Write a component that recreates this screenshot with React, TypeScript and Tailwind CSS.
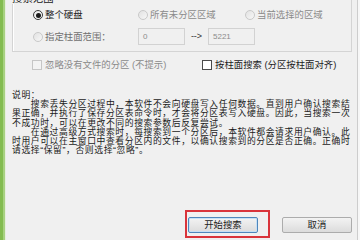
import React from 'react'

function Radio({ checked = false, disabled = false }: { checked?: boolean; disabled?: boolean }) {
  return (
    <span
      className={`w-[10px] h-[10px] rounded-full border flex items-center justify-center shrink-0 ${
        disabled
          ? 'border-[#c9c9c9] bg-linear-to-br from-[#e2e2e2] to-[#f7f7f7]'
          : 'border-[#3a3a3a] bg-linear-to-br from-[#e9e9e9] to-[#ffffff]'
      }`}
    >
      {checked && <span className="w-[5px] h-[5px] rounded-full bg-[#1c1c1c]" />}
    </span>
  )
}

function Checkbox({ disabled = false }: { disabled?: boolean }) {
  return (
    <span
      className={`w-[10px] h-[10px] border shrink-0 ${
        disabled ? 'border-[#c6c6c6] bg-[#f3f3f3]' : 'border-[#4a4a4a] bg-white'
      }`}
    />
  )
}

const lines = [
  '　　搜索丢失分区过程中，本软件不会向硬盘写入任何数据。直到用户确认搜索结',
  '果正确，并执行了保存分区表命令时，才会将分区表写入硬盘。因此，当搜索一次',
  '不成功时，可以在更改不同的搜索参数后反复尝试。',
  '　　在通过高级方式搜索时，每搜索到一个分区后，本软件都会请求用户确认。此',
  '时用户可以在主窗口中查看分区内的文件，以确认搜索到的分区是否正确。正确时',
  '请选择“保留”，否则选择“忽略”。',
]

export default function App() {
  return (
    <div className="w-[360px] h-[240px] overflow-hidden flex bg-[#f0f0f0] text-[#1b1b1b] text-[9.4px] font-['Liberation_Sans','Noto_Sans_CJK_SC',sans-serif]">
      {/* left green frame */}
      <div className="w-[3px] bg-[#83bc50]" />
      <div className="w-[2px] bg-[#a7d180]" />
      <div className="w-[1px] bg-[#e6efdd]" />

      <div className="flex-1 flex flex-col pl-[6px] pr-[5px] relative">
        {/* group box */}
        <div className="relative mt-[-2px] h-[54px] border border-[#d4d4d4] shadow-[inset_1px_1px_0_#ffffff] flex flex-col pt-[10px] pl-[20px]">
          <span className="absolute left-[-2px] top-[-5px] leading-[10px] text-[10.4px] px-[1px] bg-[#f0f0f0] text-[#222]">
            搜索范围
          </span>

          <div className="h-[12px] flex items-center">
            <div className="w-[105px] flex items-center gap-[2px]">
              <Radio checked />
              <span className="leading-[12px]">整个硬盘</span>
            </div>
            <div className="w-[107px] flex items-center gap-[2px] text-[#8a8a8a]">
              <Radio disabled />
              <span className="leading-[12px]">所有未分区区域</span>
            </div>
            <div className="flex items-center gap-[2px] text-[#8a8a8a]">
              <Radio disabled />
              <span className="leading-[12px]">当前选择的区域</span>
            </div>
          </div>

          <div className="h-[17px] mt-[7px] flex items-center">
            <div className="w-[105px] flex items-center gap-[2px] text-[#6f6f6f]">
              <Radio disabled />
              <span className="leading-[12px]">指定柱面范围：</span>
            </div>
            <div className="w-[47px] h-[17px] border border-[#d2d2d2] flex items-center pl-[4px] text-[8px] text-[#8c8c8c]">
              0
            </div>
            <div className="w-[23px] text-center text-[9px] text-[#333]">--&gt;</div>
            <div className="w-[47px] h-[17px] border border-[#d2d2d2] flex items-center pl-[4px] text-[8px] text-[#8c8c8c]">
              5221
            </div>
          </div>
        </div>

        {/* checkboxes */}
        <div className="h-[12px] mt-[7px] flex items-center pl-[20px]">
          <div className="w-[170px] flex items-center gap-[3px] text-[#8a8a8a]">
            <Checkbox disabled />
            <span className="leading-[12px]">忽略没有文件的分区 (不提示)</span>
          </div>
          <div className="flex items-center gap-[3px]">
            <Checkbox />
            <span className="leading-[12px]">按柱面搜索 (分区按柱面对齐)</span>
          </div>
        </div>

        {/* description */}
        <div className="mt-[20px] text-[8.8px] tracking-[0.6px] leading-[9.2px] whitespace-pre">
          <div>说明：</div>
          {lines.map((l, i) => (
            <div key={i}>{l}</div>
          ))}
        </div>

        {/* buttons */}
        <div className="mt-auto mb-[7px] flex justify-end gap-[24px]">
          <button className="w-[70px] h-[16px] rounded-[2px] border border-[#4f86bb] bg-linear-to-b from-[#f3f3f3] to-[#dcdcdc] shadow-[inset_0_0_0_1px_#c6e0f5] leading-[14px]">
            开始搜索
          </button>
          <button className="w-[70px] h-[16px] rounded-[2px] border border-[#acacac] bg-linear-to-b from-[#f3f3f3] to-[#dcdcdc] leading-[14px]">
            取消
          </button>
        </div>

        {/* red highlight annotation */}
        <div className="absolute left-[179px] top-[210px] w-[85px] h-[28px] border-2 border-[#d9343b]" />
      </div>

      {/* right frame */}
      <div className="w-[1px] bg-[#cdcdcd]" />
      <div className="w-[2px] bg-[#f7f7f7]" />
    </div>
  )
}
